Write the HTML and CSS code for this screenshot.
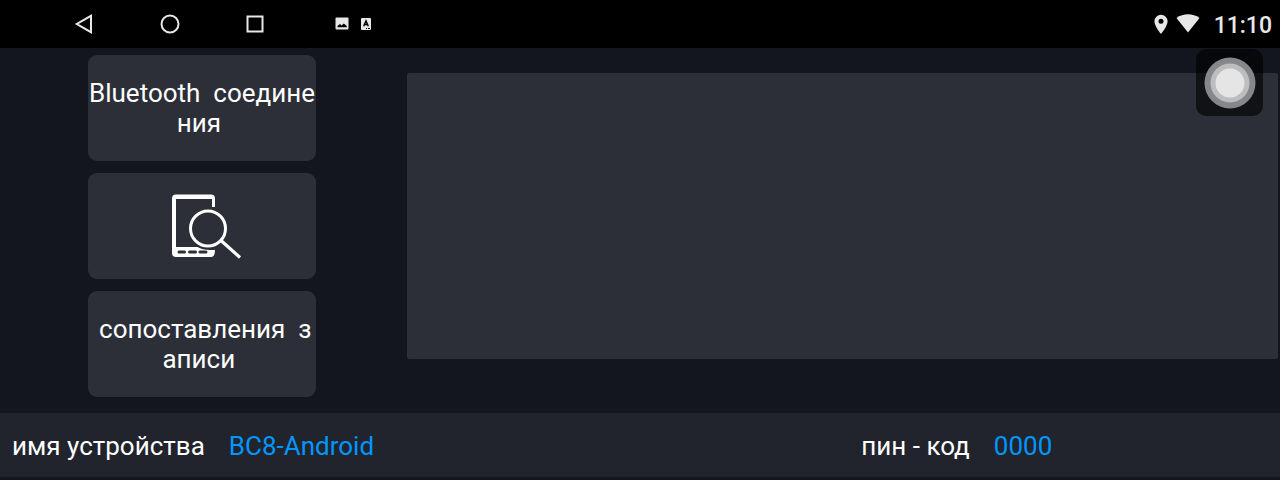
FILE: index.html
```html
<!DOCTYPE html>
<html lang="ru">
<head>
<meta charset="utf-8">
<meta name="viewport" content="width=device-width, initial-scale=1">
<title>Bluetooth</title>
<link rel="stylesheet" href="styles.css">
</head>
<body>
<header class="status-bar">
  <nav class="nav-keys">
    <button class="nav-key" type="button" aria-label="Назад">
      <svg width="24" height="24" viewBox="0 0 24 24"><path d="M18 3.800v16.400L3.800 12z"/></svg>
    </button>
    <button class="nav-key" type="button" aria-label="Домой">
      <svg width="24" height="24" viewBox="0 0 24 24"><circle cx="12" cy="12" r="8.500"/></svg>
    </button>
    <button class="nav-key" type="button" aria-label="Недавние">
      <svg width="24" height="24" viewBox="0 0 24 24"><rect x="4.500" y="4.500" width="15" height="15"/></svg>
    </button>
  </nav>
  <div class="notices">
    <svg width="14" height="14" viewBox="0 0 14 14"><path fill="#e8e8e8" d="M1.500.5h11q1 0 1 1v10q0 1-1 1h-11q-1 0-1-1v-10q0-1 1-1z"/><path fill="#000" d="M2.500 10.300V9L5 7l1.600 1.500L8.800 6.500l3 2.500v1.300z"/></svg>
    <svg width="14" height="14" viewBox="0 0 14 14"><path fill="#e8e8e8" d="M3 1h8q1 0 1 1v10q0 1-1 1H3q-1 0-1-1V2q0-1 1-1z"/><path fill="none" stroke="#000" stroke-width="1.500" d="M4.700 9.200 7 3.800l2.300 5.400M5.500 7.500h3"/><path fill="none" stroke="#000" d="M7 11.500h1m1 0h2"/></svg>
  </div>
  <div class="indicators">
    <svg width="14" height="20" viewBox="0 0 14 20"><path fill="#e8e8e8" fill-rule="evenodd" d="M7 .7a6.600 6.600 0 0 0-6.600 6.600C.4 12.200 7 20 7 20s6.600-7.800 6.600-12.700A6.600 6.600 0 0 0 7 .7zm0 4.100a2.500 2.500 0 1 1 0 5 2.500 2.500 0 0 1 0-5z"/></svg>
    <svg width="24" height="20" viewBox="0 0 24 20"><path fill="#e8e8e8" d="M.5 4C7 -1 17 -1 23.500 4L12 18.500z"/></svg>
    <time class="clock">11:10</time>
  </div>
</header>

<main class="content">
  <div class="actions">
    <button class="action" type="button"><span class="action-label">Bluetooth  соедине<br>ния </span></button>
    <button class="action" type="button" aria-label="Поиск устройств">
      <svg class="search-icon" width="80" height="66" viewBox="-9 0 80 66">
        <path fill="#fff" fill-rule="evenodd" d="M5 1.500h35q4 0 4 4V14h-3V6H5v48h21.500q5 3 12 3H44q0 7-4 7H5Q1 64 1 60V5.500Q1 1.500 5 1.500z"/>
        <path d="M8 59h5.500m5 0h6m4.500 0h6" stroke="#2c2f37" stroke-width="3" stroke-linecap="round"/>
        <circle cx="37" cy="35.500" r="17.500" fill="none" stroke="#fff" stroke-width="3"/>
        <path d="m50 47.500 19 17" fill="none" stroke="#fff" stroke-width="3.200"/>
      </svg>
    </button>
    <button class="action" type="button"><span class="action-label"> сопоставления  з<br>аписи </span></button>
  </div>
  <section class="device-list" aria-label="Устройства"></section>
</main>

<footer class="info-bar">
  <div class="info">
    <span>имя устройства</span>
    <span class="info-value">BC8-Android</span>
  </div>
  <div class="info">
    <span>пин - код</span>
    <span class="info-value">0000</span>
  </div>
</footer>

<button class="assist" type="button" aria-label="Быстрое меню">
  <svg width="52" height="52" viewBox="0 0 52 52"><circle cx="26" cy="26" r="25.500" fill="#86878a"/><circle cx="26" cy="26" r="19.500" fill="#bcbdbf"/><circle cx="26" cy="26" r="14.500" fill="#e5e5e6"/></svg>
</button>
</body>
</html>
```
FILE: styles.css
```css
* { box-sizing: border-box; }

body {
  margin: 0;
  min-height: 100vh;
  display: flex;
  flex-direction: column;
  background: #13161e;
  color: #fff;
  font: 26px/30px Roboto, "Noto Sans", sans-serif;
}

button {
  border: 0;
  padding: 0;
  color: inherit;
  font: inherit;
}

svg { display: block; }

.status-bar {
  display: flex;
  align-items: center;
  height: 48px;
  padding: 0 8px 0 73px;
  background: #000;
}

.nav-keys {
  display: flex;
  gap: 61px;
}

.nav-key {
  background: none;
  fill: none;
  stroke: #e8e8e8;
  stroke-width: 2;
}

.notices {
  display: flex;
  gap: 10px;
  margin-left: 68px;
}

.indicators {
  display: flex;
  align-items: center;
  gap: 8px;
  margin-left: auto;
}

.clock {
  margin-left: 6px;
  padding-top: 4px;
  color: #e8e8e8;
  font-size: 23px;
  font-weight: 500;
}

.content {
  flex: 1;
  display: flex;
  gap: 91px;
  padding: 7px 2px 16px 88px;
}

.actions {
  flex: none;
  width: 228px;
  display: flex;
  flex-direction: column;
  gap: 12px;
}

.action {
  min-height: 106px;
  border-radius: 9px;
  background: #2c2f37;
  text-align: center;
}

.action-label { white-space: pre; }

.search-icon { margin: 0 auto; }

.device-list {
  flex: 1;
  margin: 18px 0 38px;
  border-radius: 2px;
  background: #2c2f37;
}

.info-bar {
  display: grid;
  grid-template-columns: 2fr 1fr;
  gap: 12px;
  margin-bottom: 3px;
  padding: 18px 0 16px 12px;
  background: #22242d;
}

.info {
  display: flex;
  gap: 24px;
}

.info-value { color: #0097fc; }

.assist {
  position: absolute;
  top: 49px;
  right: 17px;
  display: grid;
  place-items: center;
  width: 67px;
  height: 67px;
  border-radius: 10px;
  background: rgb(0 0 0 / 60%);
}
```
